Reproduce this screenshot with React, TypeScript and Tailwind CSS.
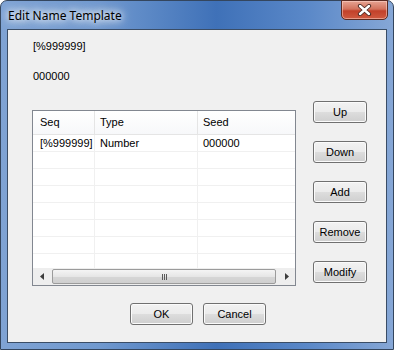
const rows = [
  { seq: "[%999999]", type: "Number", seed: "000000" },
  { seq: "", type: "", seed: "" },
  { seq: "", type: "", seed: "" },
  { seq: "", type: "", seed: "" },
  { seq: "", type: "", seed: "" },
  { seq: "", type: "", seed: "" },
  { seq: "", type: "", seed: "" },
  { seq: "", type: "", seed: "" },
];

function Button({ label, className = "" }: { label: string; className?: string }) {
  return (
    <button
      className={`h-[22px] rounded-[3px] border border-[#707070] bg-[linear-gradient(#f2f2f2_0%,#ebebeb_50%,#dddddd_50%,#cfcfcf_100%)] shadow-[inset_0_0_0_1px_#fbfbfb] text-[11px] leading-none text-black ${className}`}
    >
      {label}
    </button>
  );
}

function Arrow({ dir }: { dir: "left" | "right" }) {
  return (
    <svg width="4" height="7" viewBox="0 0 4 7">
      <path d={dir === "left" ? "M4 0 L0 3.5 L4 7 Z" : "M0 0 L4 3.5 L0 7 Z"} fill="#3c3c3c" />
    </svg>
  );
}

export default function App() {
  return (
    <div className="w-[394px] h-[350px] font-['Liberation_Sans',Arial,sans-serif] text-[11px] text-black">
      <div className="h-full flex flex-col rounded-t-[7px] border border-[#34465e] bg-[linear-gradient(90deg,#7fa3d4_0%,#7099cf_25%,#3f71b8_55%,#5a88c8_78%,#86a7d6_100%)]">
        {/* Title bar */}
        <div className="h-[28px] shrink-0 flex items-start pl-[7px]">
          <span className="mt-[7px] text-[12px] leading-[16px] font-['Noto_Sans',sans-serif] text-black [text-shadow:0_0_6px_#fff,0_0_10px_#fff,0_0_14px_#fff]">
            Edit Name Template
          </span>
          <div className="ml-auto mr-[5px] -mt-px w-[47px] h-[20px] rounded-b-[5px] border border-[#5b2b22] bg-[linear-gradient(#e6a493_0%,#d2725c_45%,#c2412a_55%,#cf5a40_100%)] shadow-[inset_0_0_0_1px_rgba(255,220,210,0.5)] flex items-center justify-center">
            <svg width="15" height="12" viewBox="0 0 15 12">
              <path d="M3 2 L12 10 M12 2 L3 10" stroke="#4a2a24" strokeWidth="4.2" strokeLinecap="round" />
              <path d="M3 2 L12 10 M12 2 L3 10" stroke="#ffffff" strokeWidth="2.4" strokeLinecap="round" />
            </svg>
          </div>
        </div>

        {/* Client area */}
        <div className="flex-1 mx-[6px] mb-[6px] border border-[#3a4d66] bg-[#f0f0f0] flex flex-col">
          <div className="pl-[25px] pt-[10px]">
            <div className="leading-[13px]">[%999999]</div>
            <div className="mt-[17px] leading-[13px]">000000</div>

            <div className="mt-[18px] flex items-start">
              {/* List view */}
              <div className="ml-[-1px] mt-[9px] w-[264px] h-[176px] border border-[#828790] bg-white flex flex-col">
                <div className="h-[24px] shrink-0 flex border-b border-[#e5e5e5] bg-[linear-gradient(#ffffff,#f7f8fa)]">
                  <div className="w-[62px] pl-[7px] flex items-center border-r border-[#e5e5e5]">Seq</div>
                  <div className="w-[103px] pl-[5px] flex items-center border-r border-[#e5e5e5]">Type</div>
                  <div className="flex-1 pl-[5px] flex items-center">Seed</div>
                </div>
                <div className="flex-1 overflow-hidden">
                  {rows.map((r, i) => (
                    <div key={i} className="h-[17px] flex border-b border-[#f0f0f0]">
                      <div className="w-[62px] pl-[7px] flex items-center border-r border-[#f0f0f0]">{r.seq}</div>
                      <div className="w-[103px] pl-[5px] flex items-center border-r border-[#f0f0f0]">{r.type}</div>
                      <div className="flex-1 pl-[5px] flex items-center">{r.seed}</div>
                    </div>
                  ))}
                </div>
                {/* Horizontal scrollbar */}
                <div className="h-[17px] shrink-0 flex items-center bg-[#eeeeee]">
                  <div className="w-[17px] h-full flex items-center justify-center">
                    <Arrow dir="left" />
                  </div>
                  <div className="flex-1 px-[2px] h-full flex items-center">
                    <div className="w-full h-[15px] rounded-[2px] border border-[#9b9b9b] bg-[linear-gradient(#f4f4f4_0%,#e6e6e6_50%,#d6d6d6_51%,#cfcfcf_100%)] flex items-center justify-center gap-[1px]">
                      <span className="w-px h-[6px] bg-[#5a5a5a]" />
                      <span className="w-px h-[6px] bg-[#5a5a5a]" />
                      <span className="w-px h-[6px] bg-[#5a5a5a]" />
                    </div>
                  </div>
                  <div className="w-[17px] h-full flex items-center justify-center">
                    <Arrow dir="right" />
                  </div>
                </div>
              </div>

              {/* Side buttons */}
              <div className="ml-[17px] flex flex-col gap-[18px]">
                <Button label="Up" className="w-[54px]" />
                <Button label="Down" className="w-[54px]" />
                <Button label="Add" className="w-[54px]" />
                <Button label="Remove" className="w-[54px]" />
                <Button label="Modify" className="w-[54px]" />
              </div>
            </div>
          </div>

          <div className="mt-[17px] flex justify-center gap-[10px] pl-[2px]">
            <Button label="OK" className="w-[63px]" />
            <Button label="Cancel" className="w-[63px]" />
          </div>
        </div>
      </div>
    </div>
  );
}
